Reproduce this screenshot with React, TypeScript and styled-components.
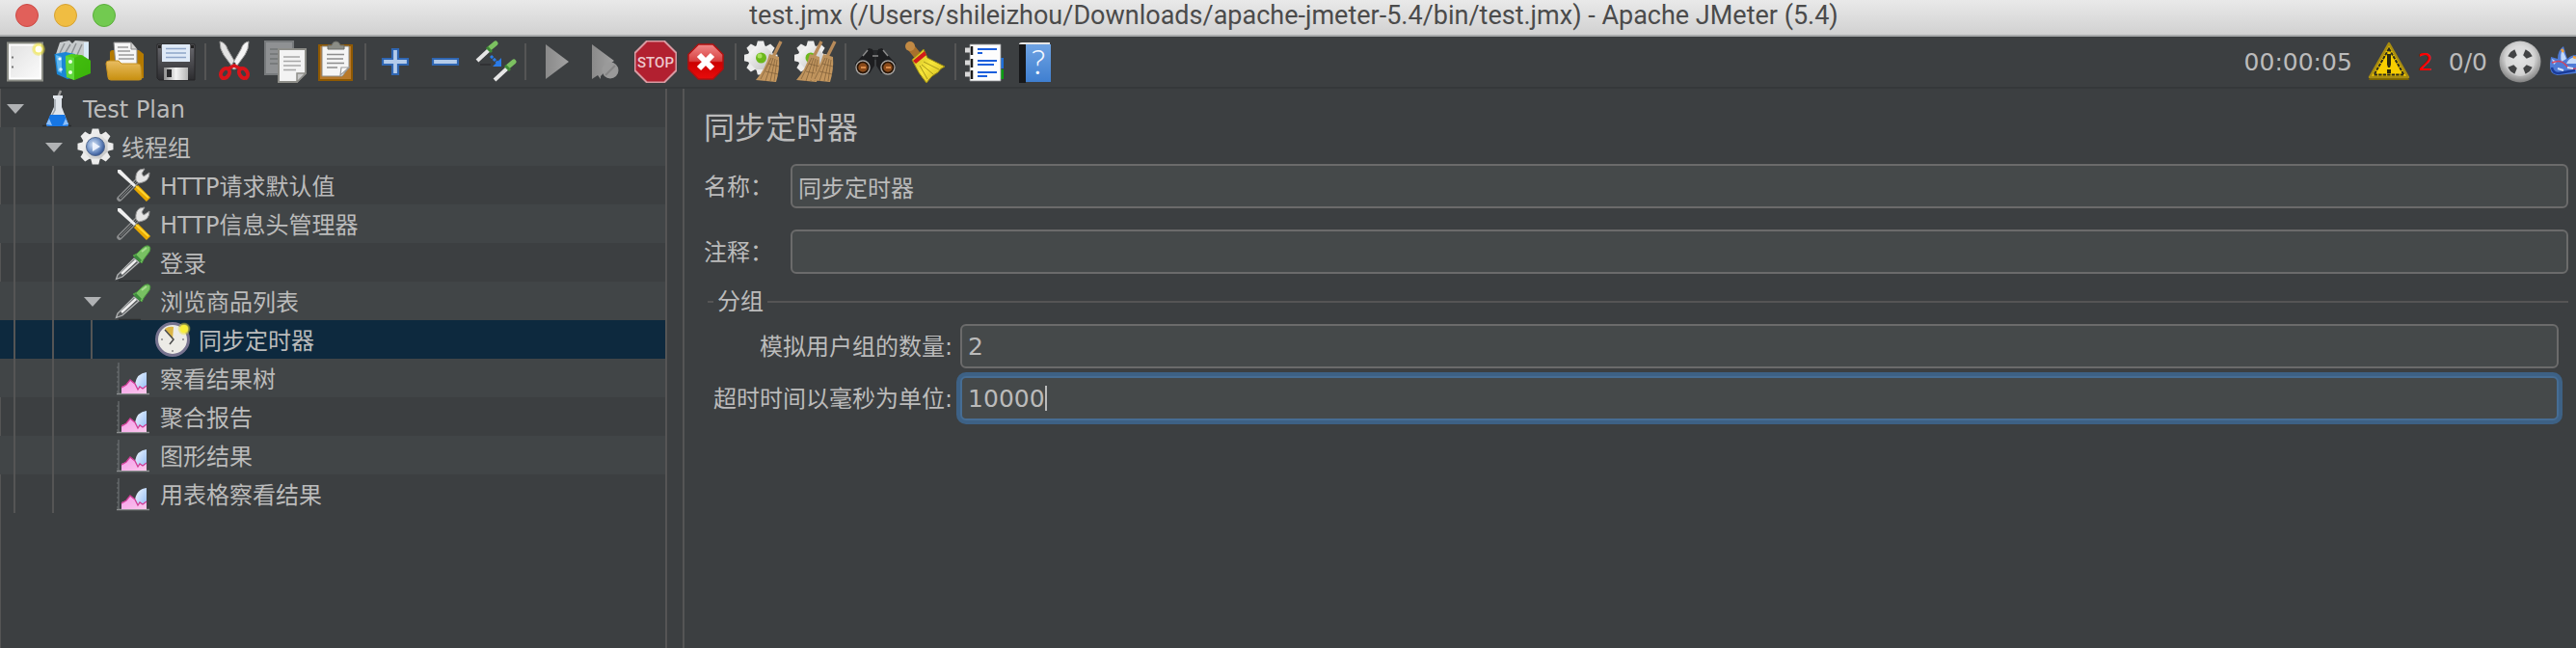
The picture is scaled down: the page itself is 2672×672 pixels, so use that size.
import React, { useState } from "react";
import styled, { createGlobalStyle, css } from "styled-components";

const color = {
  panel: "#3c3f41",
  stripe: "#414547",
  selected: "#0d293e",
  line: "#555555",
  field: "#45494a",
  fieldLine: "#6b6b6b",
  text: "#bbbbbb",
  focus: "#466d94",
  focusRing: "#3d6185",
};

const GlobalStyle = createGlobalStyle`
  *, *::before, *::after { box-sizing: border-box; }
  body {
    margin: 0;
    background: ${color.panel};
    color: ${color.text};
    font-family: "DejaVu Sans", "Noto Sans CJK SC", sans-serif;
    font-size: 24px;
    line-height: 40px;
  }
  button, input { font: inherit; color: inherit; }
`;

const Window = styled.div`
  display: flex;
  flex-direction: column;
  min-height: 100vh;
`;

/* Title bar */

const TitleBar = styled.header`
  display: grid;
  grid-template-columns: 120px 1fr 108px;
  align-items: center;
  height: 38px;
  padding-bottom: 4px;
  background: linear-gradient(#e9e9e9, #d1d1d1);
  border-bottom: 2px solid #a9abac;
`;

const Lights = styled.div`
  display: flex;
  gap: 16px;
  padding-left: 16px;
`;

const Light = styled.button<{ $fill: string; $edge: string }>`
  width: 24px;
  height: 24px;
  padding: 0;
  border: 1px solid ${(p) => p.$edge};
  border-radius: 50%;
  background: ${(p) => p.$fill};
`;

const Title = styled.h1`
  margin: 0;
  color: #4b4b4b;
  font: 400 27px/32px Roboto, sans-serif;
  text-align: center;
  white-space: nowrap;
`;

/* Toolbar */

const Toolbar = styled.div`
  display: flex;
  align-items: center;
  height: 54px;
  border-bottom: 2px solid #35383a;
  overflow: hidden;
`;

const ToolButton = styled.button`
  display: grid;
  flex: none;
  place-items: center;
  width: 52px;
  height: 52px;
  padding: 0;
  border: 0;
  background: none;
`;

const Separator = styled.span`
  flex: none;
  width: 2px;
  height: 38px;
  margin: 0 4px;
  background: ${color.line};
`;

const Status = styled.div`
  display: flex;
  align-items: center;
  margin-left: auto;
  font-size: 25px;
`;

const StatusText = styled.span`
  padding-top: 2px;
`;

const Elapsed = styled(StatusText)`
  margin-right: 16px;
`;

const ErrorCount = styled(StatusText)`
  margin: 0 16px 0 8px;
  color: #ff0000;
`;

const Threads = styled(StatusText)`
  margin-right: 12px;
`;

const RemoteIcon = styled.span`
  display: flex;
  margin-left: 8px;
`;

const Glyph = styled.svg<{ $w?: number; $h?: number }>`
  display: block;
  flex: none;
  width: ${(p) => p.$w ?? 44}px;
  height: ${(p) => p.$h ?? 44}px;
`;

/* Body */

const Body = styled.main`
  display: grid;
  flex: 1;
  grid-template-columns: 692px 16px 1fr;
`;

const Sidebar = styled.nav`
  border-right: 2px solid ${color.line};
  box-shadow: inset 1px 0 ${color.line};
`;

const Tree = styled.ul`
  margin: 0;
  padding: 0;
  list-style: none;
`;

const TreeRow = styled.li<{ $selected: boolean }>`
  display: flex;
  align-items: center;
  height: 40px;
  white-space: nowrap;
  &:nth-child(even) {
    background: ${color.stripe};
  }
  ${(p) =>
    p.$selected &&
    css`
      &&& {
        background: ${color.selected};
      }
    `}
`;

const Guide = styled.span`
  flex: none;
  align-self: stretch;
  width: 26px;
  margin-left: 14px;
  border-left: 2px solid ${color.line};
`;

const Toggle = styled.button`
  flex: none;
  width: 38px;
  height: 40px;
  padding: 2px 0 0 7px;
  border: 0;
  background: none;
`;

const ToggleSpace = styled.span`
  flex: none;
  width: 38px;
`;

const TreeLabel = styled.span`
  padding: 4px 0 0 8px;
`;

const Editor = styled.section`
  min-width: 0;
  padding: 16px 8px 16px 20px;
  border-left: 2px solid ${color.line};
`;

const Heading = styled.h2`
  margin: 0 0 12px;
  font-size: 32px;
  font-weight: 400;
  line-height: 50px;
`;

const FieldRow = styled.div`
  display: grid;
  grid-template-columns: 90px 1fr;
  align-items: center;
  & + & {
    margin-top: 22px;
  }
`;

const FieldLabel = styled.label`
  padding-top: 2px;
`;

const TextField = styled.input<{ $active?: boolean; $numeric?: boolean }>`
  display: block;
  width: 100%;
  height: 46px;
  padding: 0 6px;
  border: 2px solid ${color.fieldLine};
  border-radius: 6px;
  outline: none;
  background: ${color.field};
  font-size: ${(p) => (p.$numeric ? 25 : 24)}px;
  ${(p) =>
    p.$active &&
    css`
      border-color: ${color.focus};
      box-shadow: 0 0 0 4px ${color.focusRing};
    `}
`;

const Group = styled.fieldset`
  min-width: 0;
  margin: 14px 0 0 4px;
  padding: 8px 10px 0 6px;
  border: 0 solid ${color.line};
  border-top-width: 2px;
`;

const GroupTitle = styled.legend`
  padding: 0 4px;
  line-height: 30px;
`;

const GroupGrid = styled.div`
  display: grid;
  grid-template-columns: auto 1fr;
  gap: 8px;
  align-items: center;
`;

const GroupLabel = styled(FieldLabel)`
  text-align: right;
`;

const CaretBox = styled.div`
  position: relative;
  font-size: 25px;
`;

const Caret = styled.span<{ $chars: number }>`
  position: absolute;
  top: 10px;
  left: calc(8px + ${(p) => p.$chars}ch);
  width: 2px;
  height: 26px;
  background: ${color.text};
`;

/* Icon gradients shared by every drawing */

const Defs = () => (
  <Glyph $w={0} $h={0} aria-hidden="true">
    <defs>
      <linearGradient id="paper" x1="0" y1="0" x2="1" y2="1">
        <stop offset="0" stopColor="#e2e2e2" />
        <stop offset="1" stopColor="#fafafa" />
      </linearGradient>
      <linearGradient id="folder" x1="0" y1="0" x2="0" y2="1">
        <stop offset="0" stopColor="#e9bd62" />
        <stop offset="1" stopColor="#c8900f" />
      </linearGradient>
      <linearGradient id="green" x1="0" y1="0" x2="1" y2="1">
        <stop offset="0" stopColor="#5ddc1c" />
        <stop offset="1" stopColor="#2c9a05" />
      </linearGradient>
      <linearGradient id="disk" x1="0" y1="0" x2="0" y2="1">
        <stop offset="0" stopColor="#6b6b70" />
        <stop offset="1" stopColor="#2c2c2f" />
      </linearGradient>
      <linearGradient id="steel" x1="0" y1="0" x2="1" y2="0">
        <stop offset="0" stopColor="#8d8d8d" />
        <stop offset="0.5" stopColor="#f4f4f4" />
        <stop offset="1" stopColor="#b5b5b5" />
      </linearGradient>
      <linearGradient id="play" x1="0" y1="0" x2="1" y2="0">
        <stop offset="0" stopColor="#8a8a8a" />
        <stop offset="1" stopColor="#a2a2a2" />
      </linearGradient>
      <linearGradient id="red" x1="0" y1="0" x2="0" y2="1">
        <stop offset="0" stopColor="#f08a8a" />
        <stop offset="0.48" stopColor="#d84040" />
        <stop offset="0.52" stopColor="#cc0000" />
        <stop offset="1" stopColor="#e80c0c" />
      </linearGradient>
      <linearGradient id="gear" x1="0" y1="0" x2="1" y2="1">
        <stop offset="0" stopColor="#ffffff" />
        <stop offset="1" stopColor="#bcbcbc" />
      </linearGradient>
      <radialGradient id="ball" cx="0.5" cy="0.4" r="0.6">
        <stop offset="0" stopColor="#ffffff" />
        <stop offset="0.6" stopColor="#cfcfcf" />
        <stop offset="1" stopColor="#808080" />
      </radialGradient>
      <linearGradient id="straw" x1="0" y1="0" x2="1" y2="1">
        <stop offset="0" stopColor="#b58d5c" />
        <stop offset="1" stopColor="#c99a5f" />
      </linearGradient>
      <linearGradient id="yellow" x1="0" y1="0" x2="1" y2="1">
        <stop offset="0" stopColor="#c9b820" />
        <stop offset="0.5" stopColor="#f6e53a" />
        <stop offset="1" stopColor="#cdb419" />
      </linearGradient>
      <linearGradient id="book" x1="0" y1="0" x2="0" y2="1">
        <stop offset="0" stopColor="#6fa3e3" />
        <stop offset="1" stopColor="#3f7fd0" />
      </linearGradient>
      <linearGradient id="ice" x1="0" y1="0" x2="1" y2="1">
        <stop offset="0" stopColor="#f4faff" />
        <stop offset="1" stopColor="#8db8f5" />
      </linearGradient>
      <linearGradient id="pink" x1="0" y1="0" x2="1" y2="1">
        <stop offset="0" stopColor="#f79be9" />
        <stop offset="1" stopColor="#f9c8ec" />
      </linearGradient>
      <radialGradient id="lens" cx="0.4" cy="0.4" r="0.7">
        <stop offset="0" stopColor="#d5e2f5" />
        <stop offset="0.5" stopColor="#7d9ccc" />
        <stop offset="1" stopColor="#1d3f85" />
      </radialGradient>
      <radialGradient id="spark">
        <stop offset="0" stopColor="#fffff0" />
        <stop offset="0.45" stopColor="#f8ee5a" />
        <stop offset="1" stopColor="#e8dc30" stopOpacity="0.25" />
      </radialGradient>
    </defs>
  </Glyph>
);

type GearProps = { cx: number; cy: number; r: number };

const GearShape = ({ cx, cy, r }: GearProps) => (
  <g fill="url(#gear)" transform={`translate(${cx} ${cy})`}>
    <circle r={r * 0.76} />
    {[0, 45, 90, 135, 180, 225, 270, 315].map((a) => (
      <path
        key={a}
        transform={`rotate(${a})`}
        fill="#ececec"
        d={`M${-r * 0.26} ${-r * 0.68}L${-r * 0.18} ${-r}H${r * 0.18}L${r * 0.26} ${-r * 0.68}Z`}
      />
    ))}
  </g>
);

const BroomShape = ({ dx = 0 }: { dx?: number }) => (
  <g transform={`translate(${dx} 0)`}>
    <path d="M38 1L30 17" stroke="#b88b5a" strokeWidth="3.4" />
    <path d="M26 14L36 17Q37 30 33 43L12 41Q22 30 26 14Z" fill="url(#straw)" />
    <path
      d="M28 18L17 40M30 18L22 42M32 19L27 42M34 20L31 42M25 24L36 27M22 32L35 35"
      stroke="#80603a"
      strokeWidth="1"
      fill="none"
      opacity="0.75"
    />
  </g>
);

const PipetteShape = () => (
  <>
    <path d="M5 39.500H28" stroke="#2b2d2f" strokeWidth="1.500" />
    <path d="M2.500 37.500L4 33L21 16L26 20L9 35Z" fill="#55585a" stroke="#b4b6b7" strokeWidth="1.300" />
    <path d="M8 32L23 18" stroke="#efefef" strokeWidth="2.500" />
    <path d="M20 13L29 21L31 17L37 9Q39 4 36 3Q33 2 29 6L24 11Z" fill="#78c162" stroke="#4b9a40" strokeWidth="1" />
    <path d="M22 13L28 19" stroke="#3b8a3c" strokeWidth="3" />
    <path d="M29 9L34 5" stroke="#a9dc92" strokeWidth="2" />
  </>
);

const toolIcons = {
  new: (
    <>
      <path d="M4 2.500H40V41.500H4Z" fill="#fff" stroke="#8b8d86" strokeWidth="2" />
      <path d="M7 5.500H37V38.500H7Z" fill="url(#paper)" />
      <path d="M8 17.500h2M8 27.500h2" stroke="#777" strokeWidth="2" />
      <circle cx="36" cy="9" r="7" fill="url(#spark)" />
      <circle cx="36" cy="9" r="3.500" fill="#fffff4" />
    </>
  ),
  templates: (
    <>
      <path d="M2 14L6 2L16 0L19 3L22 0L36 1V20L12 18Z" fill="#c6cacc" />
      <path d="M6 13L11 3M11 14L17 4M18 14L23 3M24 15L29 4" stroke="#8d9194" strokeWidth="1.500" />
      <path d="M31 2L36 2V20L31 18Z" fill="#d8e9f7" />
      <path d="M0.500 14L12 12L22 14V38L14 40L3 35Z" fill="#1b86d6" />
      <path d="M2 15L8 17V34L4 32Z" fill="#63b9f0" />
      <path d="M12 16L18 14L28 15L38 21V34L21 41L13 38Z" fill="url(#green)" />
      <path d="M12 16L21 18V41L13 38Z" fill="#5fd83a" />
      <path d="M21 18L29 15L38 21V34L21 41Z" fill="#3fb90c" opacity="0.8" />
      <circle cx="6" cy="19" r="1.600" fill="#fff" />
      <circle cx="7" cy="30" r="1.800" fill="#d9efff" />
      <circle cx="17" cy="22" r="2" fill="#e8ffe0" />
      <circle cx="17" cy="33" r="2" fill="#e8ffe0" />
    </>
  ),
  open: (
    <>
      <path d="M6 13Q6 10 9 10H36L41 14V39H6Z" fill="#b57a00" />
      <path d="M10 2H28L34 9V26H12Z" fill="#f6f6f6" stroke="#8a8a8a" strokeWidth="1" />
      <path d="M28 2V9H34" fill="#d5d5d5" stroke="#8a8a8a" strokeWidth="1" />
      <path d="M14 7h11M14 11h13M15 15h16M15 19h16" stroke="#9a9a9a" strokeWidth="1.500" />
      <path d="M2 24Q2 21 5 21H15L18 24H35Q38 24 38 27L39 39Q39 41 36 41H7Q4 41 4 38Z" fill="url(#folder)" stroke="#c38f20" strokeWidth="1" />
    </>
  ),
  save: (
    <>
      <path d="M3 4H42V41H5L3 39Z" fill="url(#disk)" stroke="#252527" strokeWidth="1" />
      <path d="M4 5h3v3h-3zM38 5h3v3h-3z" fill="#222" />
      <path d="M8 4H37V22H8Z" fill="#dfeaf7" />
      <path d="M12 8.500H33M12 13H33M12 17.500H33" stroke="#8fa6c9" strokeWidth="1.500" />
      <path d="M10 28H35V41H10Z" fill="url(#steel)" />
      <path d="M13 30H18V38H13Z" fill="#2a2a2c" />
    </>
  ),
  cut: (
    <>
      <path d="M6 1Q12 2 14 9L25 28L21 30L10 15Q6 9 6 1Z" fill="#e3e3e3" stroke="#9b9b9b" strokeWidth="1" />
      <path d="M36 1Q30 2 28 9L17 28L21 30L32 15Q36 9 36 1Z" fill="#f5f5f5" stroke="#9b9b9b" strokeWidth="1" />
      <circle cx="21" cy="24" r="1.500" fill="#444" />
      <ellipse cx="11.500" cy="34" rx="4" ry="5.500" transform="rotate(35 11.500 34)" fill="none" stroke="#d8141a" strokeWidth="4" />
      <ellipse cx="30.500" cy="34" rx="4" ry="5.500" transform="rotate(-35 30.500 34)" fill="none" stroke="#d8141a" strokeWidth="4" />
      <path d="M15 29L21 26L27 29" stroke="#d8141a" strokeWidth="3.500" fill="none" />
    </>
  ),
  copy: (
    <>
      <path d="M1 1H30V35H1Z" fill="#8f9193" stroke="#777a7c" strokeWidth="2" />
      <path d="M6 9H24M6 14H20M6 19H20M6 24H16" stroke="#727476" strokeWidth="1.500" />
      <path d="M15 9H43V34L34 43H15Z" fill="#f3f3f3" stroke="#8d8d88" strokeWidth="2" />
      <path d="M43 34H34V43Z" fill="#c9c9c9" stroke="#8d8d88" strokeWidth="1.500" />
      <path d="M20 17H37M20 21.500H38M20 26H38M20 30.500H33" stroke="#a8a8a8" strokeWidth="1.500" />
    </>
  ),
  paste: (
    <>
      <path d="M5 5H39V41H5Z" fill="#b8792a" stroke="#8f5902" strokeWidth="2" />
      <path d="M8 6H36V28L29 37H8Z" fill="#f5f5f5" stroke="#8d8d88" strokeWidth="1" />
      <path d="M36 28H28L27 36Z" fill="#fff" stroke="#999" strokeWidth="1.200" />
      <path d="M13 14.500H31M13 19H30M13 23.500H31M13 28H24" stroke="#8d8d8d" strokeWidth="1.500" />
      <path d="M14 9V5H18Q19 1 22.500 1Q26 1 27 5H31V9Z" fill="#8b8d86" stroke="#6b6d68" strokeWidth="1" />
    </>
  ),
  plus: (
    <path d="M19 9H25V19H35V25H25V35H19V25H9V19H19Z" fill="#b3cbea" stroke="#2f66b2" strokeWidth="2.200" />
  ),
  minus: <path d="M9 19H35V25H9Z" fill="#b3cbea" stroke="#2f66b2" strokeWidth="2.200" />,
  toggle: (
    <>
      <path d="M6 25H17" stroke="#2c2e30" strokeWidth="1.500" />
      <path d="M3 21L16 9" stroke="#e6e6e6" strokeWidth="4" />
      <path d="M16 8L22 3" stroke="#7cc160" strokeWidth="5" strokeLinecap="round" />
      <path d="M13 7L18 12" stroke="#3f8a37" strokeWidth="3" />
      <path d="M21 41L34 29" stroke="#e6e6e6" strokeWidth="4" />
      <path d="M35 27L41 22" stroke="#7cc160" strokeWidth="5" strokeLinecap="round" />
      <path d="M32 26L37 31" stroke="#3f8a37" strokeWidth="3" />
      <path d="M17 16L24 23" stroke="#2a7be8" strokeWidth="3" strokeDasharray="3 1" />
      <path d="M28 18V27H19Z" fill="#2a7be8" />
    </>
  ),
  start: <path d="M12 4L36 22L12 40Z" fill="url(#play)" />,
  startNoPause: (
    <>
      <path d="M8 4L31 21L19 30V35L17 37V40L14 36L8 40Z" fill="url(#play)" />
      <circle cx="27" cy="31" r="8.500" fill="#9a9a9a" />
      <path d="M22 36L32 26" stroke="#858585" strokeWidth="2" />
    </>
  ),
  stop: (
    <>
      <path d="M13 0.500H31L43.500 13V31L31 43.500H13L0.500 31V13Z" fill="#b22030" stroke="#d89aa2" strokeWidth="2" />
      <text x="22" y="28" textAnchor="middle" fontFamily="Roboto, sans-serif" fontSize="15" fontWeight="500" fill="#ecc8cc">
        STOP
      </text>
    </>
  ),
  shutdown: (
    <>
      <path d="M14.500 4H29.500L40 14.500V29.500L29.500 40H14.500L4 29.500V14.500Z" fill="url(#red)" stroke="#b01010" strokeWidth="1.500" />
      <path d="M15 15L29 29M29 15L15 29" stroke="#fff" strokeWidth="6" />
    </>
  ),
  clear: (
    <>
      <GearShape cx={17} cy={18} r={17.5} />
      <circle cx="17.500" cy="18" r="5.500" fill="#6cb81c" />
      <circle cx="16" cy="16" r="2.500" fill="#a8e05c" />
      <BroomShape />
    </>
  ),
  clearAll: (
    <>
      <GearShape cx={17} cy={18} r={17.5} />
      <circle cx="17" cy="18" r="5.500" fill="#6cb81c" />
      <BroomShape dx={-10} />
      <BroomShape dx={4} />
    </>
  ),
  search: (
    <>
      <path d="M14 10H30V20H14Z" fill="#26282a" />
      <path d="M10 14L15 8L19 9L21 18V26L16 34H6L1 30V24Z" fill="#1d1e20" />
      <path d="M34 14L29 8L25 9L23 18V26L28 34H38L43 30V24Z" fill="#1d1e20" />
      <path d="M9 16L14 10M35 16L30 10M19 16H25" stroke="#8a8a8a" strokeWidth="1.500" />
      <circle cx="9" cy="28" r="7" fill="#8a4a1a" stroke="#a4a4a4" strokeWidth="1.500" />
      <circle cx="35" cy="28" r="7" fill="#8a4a1a" stroke="#a4a4a4" strokeWidth="1.500" />
      <circle cx="9" cy="28" r="5.500" fill="none" stroke="#241408" strokeWidth="1.500" />
      <circle cx="35" cy="28" r="5.500" fill="none" stroke="#241408" strokeWidth="1.500" />
      <path d="M7 28h5M33 28h5" stroke="#d88a48" strokeWidth="2" />
    </>
  ),
  resetSearch: (
    <>
      <path d="M6 6L14 16" stroke="#a8702c" strokeWidth="8" strokeLinecap="round" />
      <circle cx="6" cy="6" r="5" fill="#c28a44" />
      <path d="M8 20L20 9L24 18L42 27Q37 29 35 33Q28 36 23 44Q15 35 8 20Z" fill="url(#yellow)" stroke="#9a8a12" strokeWidth="1" />
      <path d="M20 22L36 30M18 25L30 35M16 26L24 40" stroke="#a8981a" strokeWidth="1" />
      <path d="M9 21L21 11L23 15L12 24Z" fill="#d11a1a" />
    </>
  ),
  functionHelper: (
    <>
      <path d="M34 18H41V29H34Z" fill="#1f6fd8" />
      <path d="M34 30H41V40H34Z" fill="#0b9c12" />
      <path d="M6 4H38V42H6Z" fill="#fdfdfd" stroke="#8e9092" strokeWidth="0.800" />
      <path d="M1 10H8M1 23H8M1 35H8" stroke="#d8d8d8" strokeWidth="5" />
      <path d="M8 6V15M8 19V28M8 31V40" stroke="#1c1c1c" strokeWidth="2.500" />
      <path d="M14 9H34M14 13H19M14 21H34M14 25H31M14 33H34M14 37H24" stroke="#1c5fdc" strokeWidth="2" />
    </>
  ),
  help: (
    <>
      <path d="M5 4Q5 2 8 2H37V8H5Z" fill="#e6e6e6" />
      <path d="M5 4H12V44H5Z" fill="#17181a" />
      <path d="M12 4H38V43H12Z" fill="url(#book)" />
      <text x="25" y="35" textAnchor="middle" fontFamily="Lato, sans-serif" fontSize="36" fontWeight="300" fill="#f4f8ff">
        ?
      </text>
    </>
  ),
};

type ToolName = keyof typeof toolIcons;

const toolGroups: { name: ToolName; label: string }[][] = [
  [
    { name: "new", label: "新建" },
    { name: "templates", label: "模板" },
    { name: "open", label: "打开" },
    { name: "save", label: "保存" },
  ],
  [
    { name: "cut", label: "剪切" },
    { name: "copy", label: "复制" },
    { name: "paste", label: "粘贴" },
  ],
  [
    { name: "plus", label: "展开" },
    { name: "minus", label: "折叠" },
    { name: "toggle", label: "切换" },
  ],
  [
    { name: "start", label: "启动" },
    { name: "startNoPause", label: "不停顿开始" },
    { name: "stop", label: "停止" },
    { name: "shutdown", label: "关闭" },
  ],
  [
    { name: "clear", label: "清除" },
    { name: "clearAll", label: "清除全部" },
  ],
  [
    { name: "search", label: "查找" },
    { name: "resetSearch", label: "重置查找" },
  ],
  [
    { name: "functionHelper", label: "函数助手" },
    { name: "help", label: "帮助" },
  ],
];

const WarningIcon = () => (
  <Glyph viewBox="0 0 44 44" aria-hidden="true">
    <path d="M3 37H41L43 41H1Z" fill="#7a6300" />
    <path d="M22 3L42 38H2Z" fill="#f6cb00" stroke="#a88c10" strokeWidth="2.500" strokeLinejoin="round" />
    <path d="M22 8.500L37.500 35.500H6.500Z" fill="#f8ce00" stroke="#2b2a1c" strokeWidth="2" strokeDasharray="3.500 1" />
    <path d="M20 14H24V25L23 28H21L20 25ZM20 30H24V34H20Z" fill="#2b2a10" />
  </Glyph>
);

const RemoteStatusIcon = () => (
  <Glyph viewBox="0 0 44 44" aria-hidden="true">
    <circle cx="22" cy="22" r="21.500" fill="url(#ball)" />
    <circle cx="22" cy="22" r="15" fill="#d9d9d9" opacity="0.7" />
    {[45, 135, 225, 315].map((a) => (
      <path key={a} transform={`rotate(${a} 22 22)`} d="M17 9L22 8L27 9L24.500 15H19.500Z" fill="#434445" />
    ))}
  </Glyph>
);

const FeatherIcon = () => (
  <Glyph viewBox="0 0 28 44" $w={28} aria-hidden="true">
    <path d="M2 17L9 19Q9 10 15 6L19 19Q23 15 28 15V34L9 36Q0 35 1 24Z" fill="#4f7bd6" />
    <path d="M14 9Q11 15 13 22L18 19ZM28 17Q20 18 18 24L28 24ZM3 19L8 22L5 25Z" fill="#c3d8f8" />
    <path d="M3 23Q12 19 17 25T28 29" fill="none" stroke="#cf4560" strokeWidth="1.500" />
    <path d="M3 28Q4 34 10 34L27 31" fill="none" stroke="#1a3c9a" strokeWidth="2.500" />
    <path d="M9 29L15 31M19 28L25 29" stroke="#d5e2fa" strokeWidth="2" />
    <path d="M13 9L15 12M25 17L28 18" stroke="#f2a33c" strokeWidth="2.500" />
  </Glyph>
);

const chartIcon = (
  <>
    <path d="M5 4V37M3 9h2M3 14h2M3 19h2M3 24h2M3 29h2M3 34h2" stroke="#6c7072" strokeWidth="1.200" />
    <path d="M3 36.500H37" stroke="#8c8f90" strokeWidth="1.500" />
    <path d="M22 26Q24 15 34 14V35H22Z" fill="url(#ice)" />
    <path d="M8 29L13 27L17 22L22 26L25 31L27 29L31 31L34 28V36H8Z" fill="url(#pink)" />
    <path d="M8 30L13 27L17 22L22 26L25 32L27 29L30 31L34 28" fill="none" stroke="#cf3d96" strokeWidth="1.300" />
  </>
);

const treeIcons = {
  plan: (
    <>
      <path d="M6 38.500H36" stroke="#2a2c2e" strokeWidth="1.500" />
      <path d="M22 9L25 2" stroke="#9a9a9a" strokeWidth="2.500" />
      <path d="M17 7H27V10H26V19L33 37Q33 39 30 39H13Q10 39 10 37L18 19V10H17Z" fill="#dfe4ea" />
      <path d="M19 11V22L14 31" fill="none" stroke="#9da3aa" strokeWidth="1.500" />
      <path d="M14 27H29L33 37Q33 39 30 39H13Q10 39 10 37Z" fill="#1676e4" />
      <path d="M10 37L13 31L16 38ZM33 37L30 31L27 38Z" fill="#8ec0fa" />
    </>
  ),
  threads: (
    <>
      <GearShape cx={21} cy={20} r={18.5} />
      <circle cx="21" cy="20" r="9.500" fill="url(#lens)" stroke="#52698f" strokeWidth="1" />
      <path d="M18 15L26 20L18 25Z" fill="#f2f6ff" opacity="0.9" />
    </>
  ),
  config: (
    <>
      <path d="M6 34L25 15" stroke="#8d8f90" strokeWidth="5.500" strokeLinecap="round" />
      <path d="M6 34L24 16" stroke="#3e4143" strokeWidth="3" />
      <path d="M7 33L24 16" stroke="#7c7f80" strokeWidth="1" />
      <path d="M23 15Q22 7 27 4L32 3L29 8L31 11L37 7Q37 15 30 17L26 18Z" fill="#e4e4e4" stroke="#9a9a9a" strokeWidth="1" />
      <path d="M4 4L7 4L23 20L21 22L4 7Z" fill="#efefef" />
      <path d="M23 22L36 35" stroke="#e8a800" strokeWidth="6" />
      <path d="M23 21L36 33" stroke="#ffd530" strokeWidth="2" />
    </>
  ),
  sampler: <PipetteShape />,
  timer: (
    <>
      <circle cx="21" cy="20" r="16.500" fill="#ecebe6" stroke="#77738f" strokeWidth="3" />
      <path d="M21 20L13 9Q17 6 22 7Z" fill="#dcb646" />
      <path d="M13 10L22 20L18 25" fill="none" stroke="#4a4a4a" strokeWidth="1.500" />
      <path d="M21 31v2M9 20h2M31 20h2" stroke="#888" strokeWidth="1.500" />
      <circle cx="33" cy="9" r="6.500" fill="url(#spark)" />
      <circle cx="33" cy="9" r="4" fill="#f8ef3a" />
    </>
  ),
  report: chartIcon,
};

type TreeNode = {
  label: string;
  depth: number;
  icon: keyof typeof treeIcons;
  open?: boolean;
  selected?: boolean;
};

const nodes: TreeNode[] = [
  { label: "Test Plan", depth: 0, icon: "plan", open: true },
  { label: "线程组", depth: 1, icon: "threads", open: true },
  { label: "HTTP请求默认值", depth: 2, icon: "config" },
  { label: "HTTP信息头管理器", depth: 2, icon: "config" },
  { label: "登录", depth: 2, icon: "sampler" },
  { label: "浏览商品列表", depth: 2, icon: "sampler", open: true },
  { label: "同步定时器", depth: 3, icon: "timer", selected: true },
  { label: "察看结果树", depth: 2, icon: "report" },
  { label: "聚合报告", depth: 2, icon: "report" },
  { label: "图形结果", depth: 2, icon: "report" },
  { label: "用表格察看结果", depth: 2, icon: "report" },
];

export default function App() {
  const [name, setName] = useState("同步定时器");
  const [comment, setComment] = useState("");
  const [groupSize, setGroupSize] = useState("2");
  const [timeout, setTimeoutValue] = useState("10000");

  return (
    <Window>
      <GlobalStyle />
      <Defs />
      <TitleBar>
        <Lights>
          <Light aria-label="关闭窗口" $fill="#e1605a" $edge="#cc4a45" />
          <Light aria-label="最小化" $fill="#f0bd42" $edge="#d6a233" />
          <Light aria-label="缩放" $fill="#72ca50" $edge="#5aae3b" />
        </Lights>
        <Title>test.jmx (/Users/shileizhou/Downloads/apache-jmeter-5.4/bin/test.jmx) - Apache JMeter (5.4)</Title>
      </TitleBar>

      <Toolbar role="toolbar">
        {toolGroups.map((group, i) => (
          <React.Fragment key={i}>
            {i > 0 && <Separator />}
            {group.map((tool) => (
              <ToolButton key={tool.name} aria-label={tool.label}>
                <Glyph viewBox="0 0 44 44" aria-hidden="true">
                  {toolIcons[tool.name]}
                </Glyph>
              </ToolButton>
            ))}
          </React.Fragment>
        ))}
        <Status>
          <Elapsed>00:00:05</Elapsed>
          <WarningIcon />
          <ErrorCount>2</ErrorCount>
          <Threads>0/0</Threads>
          <RemoteStatusIcon />
          <RemoteIcon>
            <FeatherIcon />
          </RemoteIcon>
        </Status>
      </Toolbar>

      <Body>
        <Sidebar>
          <Tree>
            {nodes.map((node) => (
              <TreeRow key={node.label} $selected={!!node.selected}>
                {Array.from({ length: node.depth }, (_, i) => (
                  <Guide key={i} />
                ))}
                {node.open ? (
                  <Toggle aria-label={`折叠 ${node.label}`} aria-expanded="true">
                    <Glyph viewBox="0 0 18 12" $w={18} $h={12} aria-hidden="true">
                      <path d="M0 1H18L9 11Z" fill="#b0b2b4" />
                    </Glyph>
                  </Toggle>
                ) : (
                  <ToggleSpace />
                )}
                <Glyph viewBox="0 0 40 40" $w={40} $h={40} aria-hidden="true">
                  {treeIcons[node.icon]}
                </Glyph>
                <TreeLabel>{node.label}</TreeLabel>
              </TreeRow>
            ))}
          </Tree>
        </Sidebar>
        <span />
        <Editor>
          <Heading>同步定时器</Heading>
          <FieldRow>
            <FieldLabel htmlFor="name">名称：</FieldLabel>
            <TextField id="name" value={name} onChange={(e) => setName(e.target.value)} />
          </FieldRow>
          <FieldRow>
            <FieldLabel htmlFor="comment">注释：</FieldLabel>
            <TextField id="comment" value={comment} onChange={(e) => setComment(e.target.value)} />
          </FieldRow>
          <Group>
            <GroupTitle>分组</GroupTitle>
            <GroupGrid>
              <GroupLabel htmlFor="group-size">模拟用户组的数量:</GroupLabel>
              <TextField id="group-size" $numeric value={groupSize} onChange={(e) => setGroupSize(e.target.value)} />
              <GroupLabel htmlFor="timeout">超时时间以毫秒为单位:</GroupLabel>
              <CaretBox>
                <TextField
                  id="timeout"
                  $active
                  $numeric
                  value={timeout}
                  onChange={(e) => setTimeoutValue(e.target.value)}
                />
                <Caret $chars={timeout.length} />
              </CaretBox>
            </GroupGrid>
          </Group>
        </Editor>
      </Body>
    </Window>
  );
}
